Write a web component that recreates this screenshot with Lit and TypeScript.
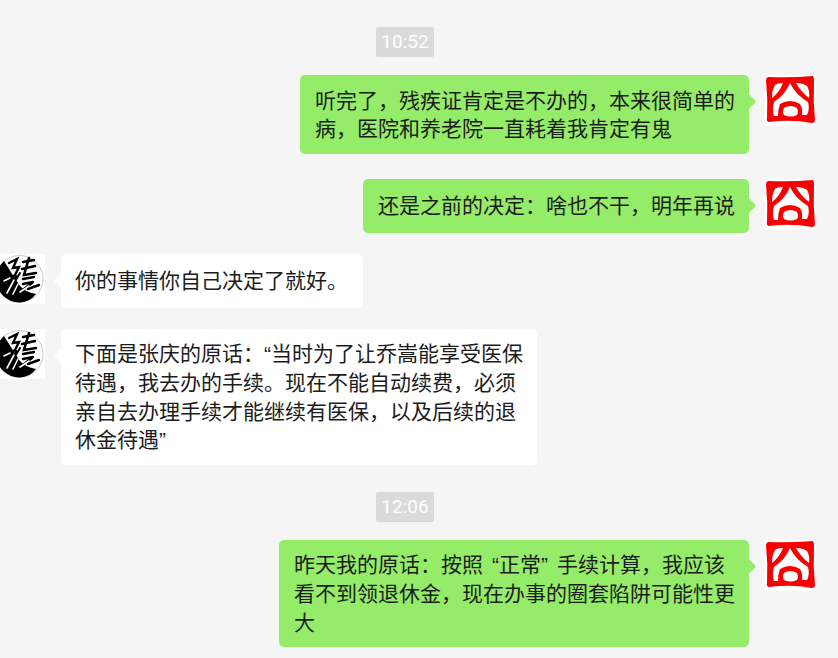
import { LitElement, html, css, svg } from "lit";
import { customElement } from "lit/decorators.js";

const seal = svg`<svg class="av" viewBox="0 0 51 51" width="51" height="51">
<rect width="51" height="51" fill="#fff"/>
<path fill="#f80000" fill-rule="evenodd" d="M3 2 Q26 3 48 1 Q49 3 49 5 Q48 26 50 46 Q49 48 47 48 Q26 44 4 47 Q1 46 2 43 Q3 24 1 5 Q1 3 3 2Z
M18 8 Q12 8 10 10 Q7 15 7 23 Q14 18 18 8Z
M31 8 Q38 8 42 11 Q45 16 44 23 Q36 17 31 8Z
M25 8 Q20 20 9 27 Q7 34 9 41 L13 41 Q13 34 15 29 Q25 23 35 29 Q38 34 37 40 L42 40 Q45 34 43 27 Q31 20 25 8Z
M19 33 Q25 29 32 33 Q34 37 32 40 Q25 43 19 40 Q17 37 19 33Z"/></svg>`;

const brush = svg`<svg class="av" viewBox="0 0 50 50" width="50" height="50">
<rect width="50" height="50" fill="#fff"/>
<circle cx="24.5" cy="25" r="23.5" fill="#fff" stroke="#bbb" stroke-width=".8"/>
<path fill="#000" d="M9 7 Q1 15 1 25 A23.5 23.5 0 0 0 24.5 48.5 Q35 48 41 40 Q30 38 25 32 Q17 20 9 7Z"/>
<g fill="none" stroke="#000" stroke-linecap="round">
<path stroke-width="2.4" d="M14 9 L22 5 L18 14 L24 13 L20 21 L13 26"/>
<path stroke-width="2" d="M21 22 L16 34 M25 19 L19 29"/>
<path stroke-width="2.6" d="M28 8 L39 6 M27 15 L40 12 M34 4 L29 21 L41 19"/>
<path stroke-width="2.4" d="M28 25 L39 23 M28 30 L38 28 M37 29 L25 38 M33 35 L44 31"/>
</g>
<g fill="none" stroke="#fff" stroke-linecap="round">
<path stroke-width="1.6" d="M9 27 L15 24 M12 39 L19 26 M18 40 L23 30 M25 38 L34 32"/>
</g></svg>`;

type Msg = { t?: string; who?: "me" | "other"; text?: string; cls?: string; gap?: boolean };
const msgs: Msg[] = [
  { t: "10:52" },
  { who: "me", cls: "w449", gap: true, text: "听完了，残疾证肯定是不办的，本来很简单的病，医院和养老院一直耗着我肯定有鬼" },
  { who: "me", text: "还是之前的决定：啥也不干，明年再说" },
  { who: "other", text: "你的事情你自己决定了就好。" },
  { who: "other", cls: "w476", text: "下面是张庆的原话：“当时为了让乔嵩能享受医保待遇，我去办的手续。现在不能自动续费，必须亲自去办理手续才能继续有医保，以及后续的退休金待遇”" },
  { t: "12:06" },
  { who: "me", cls: "w470", text: "昨天我的原话：按照“正常”手续计算，我应该看不到领退休金，现在办事的圈套陷阱可能性更大" },
];

const fmt = (s: string) => {
  const parts = s.split(/([“”])/);
  return parts.map((p, i) =>
    p === "“"
      ? html`<span class="lq ${parts[i - 1].endsWith("：") ? "trim" : ""}">“</span>`
      : p === "”"
      ? html`<span class="rq">”</span>`
      : p
  );
};

@customElement("app-root")
export class AppRoot extends LitElement {
  static styles = css`
    :host {
      display: block;
      width: 838px;
      height: 658px;
      overflow: hidden;
      background: #f5f5f5;
      font-family: "Noto Sans CJK SC", "Noto Sans", sans-serif;
    }
    .list {
      display: flex;
      flex-direction: column;
      padding: 27px 22px 0 0;
    }
    .time {
      align-self: center;
      margin: 6px 6px 18px 0;
      background: #dadada;
      color: #fff;
      border-radius: 2px;
      font: 19px/30px Roboto, "Noto Sans", sans-serif;
      width: 58px;
      text-align: center;
    }
    .time:first-child { margin-top: 0; }
    .row {
      display: flex;
      align-items: flex-start;
      margin-bottom: 21px;
      gap: 16px;
    }
    .row.me { justify-content: flex-end; }
    .row.spaced { margin-bottom: 25px; }
    .row.other { margin-left: -5px; }
    .bubble {
      position: relative;
      display: flex;
      align-items: center;
      box-sizing: border-box;
      min-height: 54px;
      border-radius: 5px;
      padding: 9.6px 14px 11.6px 15px;
      font-size: 21px;
      line-height: 28.7px;
      color: #1c1c1c;
    }
    .other .bubble { padding-left: 14px; padding-right: 15px; }
    .bubble.w449 { width: 449px; }
    .bubble.w470 { width: 470px; }
    .other .bubble.w476 { width: 476px; padding-right: 12px; }
    .lq, .rq { font-family: "Liberation Sans", sans-serif; line-height: 0; }
    .lq { padding-left: 9px; }
    .lq.trim { padding-left: 0; }
    .rq { padding-right: 9px; }
    .me .bubble { background: #95ec69; }
    .other .bubble { background: #fff; }
    .bubble::after {
      content: "";
      position: absolute;
      top: 21px;
      width: 11px;
      height: 11px;
      border-radius: 2px;
      transform: rotate(45deg);
      background: inherit;
    }
    .me .bubble::after { right: -5px; }
    .other .bubble::after { left: -5px; }
    .av { display: block; flex: none; }
  `;

  render() {
    return html`<div class="list">
      ${msgs.map((m) =>
        m.t
          ? html`<div class="time">${m.t}</div>`
          : m.who === "me"
          ? html`<div class="row me ${m.gap ? "spaced" : ""}"><div class="bubble ${m.cls ?? ""}"><div>${fmt(m.text!)}</div></div>${seal}</div>`
          : html`<div class="row other">${brush}<div class="bubble ${m.cls ?? ""}"><div>${fmt(m.text!)}</div></div></div>`
      )}
    </div>`;
  }
}
